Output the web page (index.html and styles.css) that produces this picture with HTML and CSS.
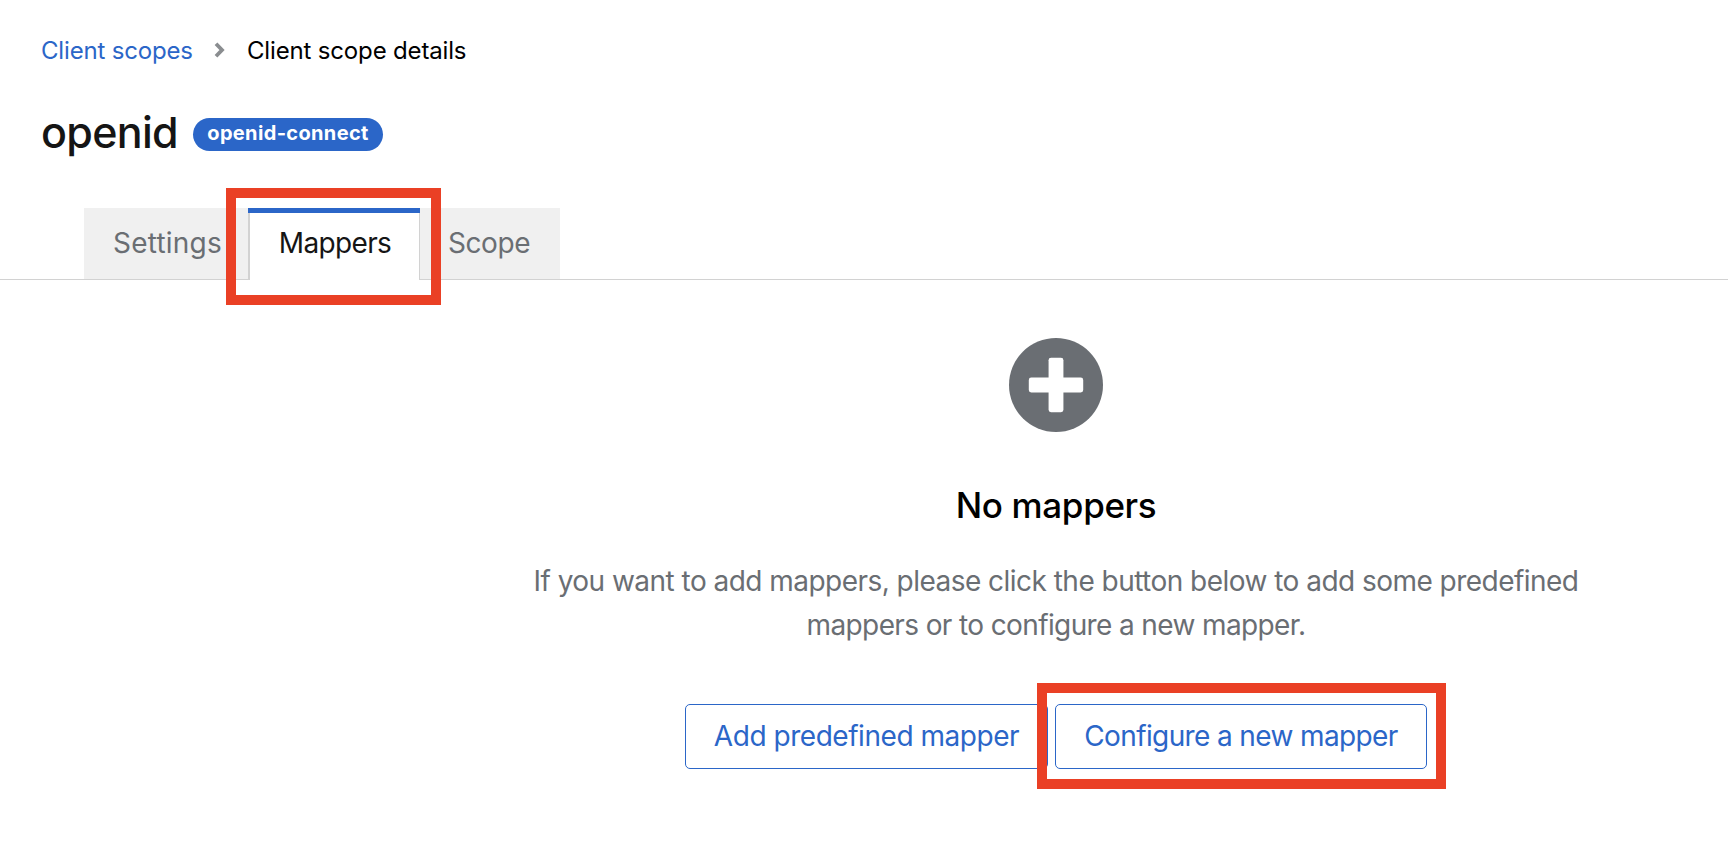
FILE: index.html
```html
<!DOCTYPE html>
<html lang="en">
<head>
<meta charset="utf-8">
<title>Client scope details</title>
<link rel="stylesheet" href="styles.css">
</head>
<body>
<header class="page-header">
  <nav class="breadcrumb">
    <a class="breadcrumb-link" href="#">Client scopes</a>
    <svg class="breadcrumb-arrow" viewBox="0 0 11 16" width="11" height="16"><path d="M2 1.8L8 8L2 14.2" fill="none" stroke="#8a8d90" stroke-width="3.8"/></svg>
    <span class="breadcrumb-current">Client scope details</span>
  </nav>
  <div class="title-row">
    <h1 class="title">openid</h1>
    <span class="badge">openid-connect</span>
  </div>
</header>
<div class="tabs">
  <div class="tab tab-settings">Settings</div>
  <div class="tab tab-active">Mappers</div>
  <div class="tab tab-scope">Scope</div>
</div>
<main class="empty-state">
  <svg class="empty-icon" viewBox="0 0 95 95" width="94" height="94"><circle cx="47.5" cy="47.5" r="47.5" fill="#6a6e73"/><rect x="20" y="40" width="55" height="15" rx="2.5" fill="#fff"/><rect x="40" y="20" width="15" height="55" rx="2.5" fill="#fff"/></svg>
  <h2 class="empty-title">No mappers</h2>
  <p class="empty-text"><span class="line-one">If you want to add mappers, please click the button below to add some predefined</span><br><span class="line-two">mappers or to configure a new mapper.</span></p>
  <div class="actions">
    <button class="button button-add">Add predefined mapper</button>
    <button class="button button-configure">Configure a new mapper</button>
  </div>
</main>
</body>
</html>
```
FILE: styles.css
```css
* { box-sizing: border-box; }
body {
  margin: 0;
  height: 868px;
  overflow: hidden;
  background: #fff;
  color: #151515;
  font-family: Inter, "Liberation Sans", sans-serif;
}
.page-header { padding: 32px 41px 0; height: 208px; }
.breadcrumb {
  display: flex;
  align-items: center;
  height: 36px;
  font-size: 24px;
  white-space: nowrap;
  color: #000;
}
.breadcrumb-link { width: 152px; color: #2b66c8; text-decoration: none; letter-spacing: -0.17px; }
.breadcrumb-arrow { margin: 0 22px 0 21px; }
.breadcrumb-current { letter-spacing: -0.16px; }
.title-row { display: flex; align-items: center; height: 60px; margin-top: 34px; }
.title { width: 152px; margin: 0; font-size: 43px; line-height: 60px; font-weight: 500; letter-spacing: -0.7px; }
.badge {
  width: 190px;
  height: 33px;
  margin-top: 4px;
  border-radius: 17px;
  background: #2b66c8;
  color: #fff;
  font-size: 20px;
  font-weight: 700;
  line-height: 31px;
  text-align: center;
  white-space: nowrap;
  letter-spacing: 0.35px;
}
.tabs {
  display: flex;
  height: 72px;
  padding-left: 84px;
  border-bottom: 1px solid #d2d2d2;
}
.tab {
  height: 71px;
  background: #f0f0f0;
  color: #6a6e73;
  font-size: 28px;
  line-height: 70px;
  text-align: center;
  white-space: nowrap;
  letter-spacing: -0.4px;
}
.tab-settings { width: 164px; padding-left: 3px; letter-spacing: 0.2px; }
.tab-scope { width: 140px; padding-right: 2px; }
.tab-active {
  position: relative;
  width: 172px;
  height: 72px;
  padding-left: 2px;
  background: #fff;
  color: #151515;
  box-shadow: inset 0 5px #2b66c8, inset 2px 0 #d2d2d2, inset -1px 0 #d2d2d2;
  letter-spacing: -0.65px;
}
.tab-active::after {
  content: "";
  position: absolute;
  inset: -20px -21px -25px -22px;
  border: 10px solid #ea4025;
}
.empty-state { display: flex; flex-direction: column; align-items: center; width: 1056px; margin-left: 528px; padding-top: 58px; }
.empty-icon { margin-right: 1px; }
.empty-title { margin: 48px 0 0; color: #000; font-size: 35px; line-height: 50px; font-weight: 500; letter-spacing: -0.35px; }
.empty-text { margin: 29px 0 0; color: #6a6e73; font-size: 28px; line-height: 44px; text-align: center; white-space: nowrap; }
.line-one { letter-spacing: -0.53px; }
.line-two { letter-spacing: -0.62px; }
.actions { display: flex; gap: 7px; margin-top: 57px; }
.button {
  position: relative;
  height: 65px;
  padding: 0;
  border: 1px solid #2b66c8;
  border-radius: 5px;
  background: #fff;
  color: #2b66c8;
  font: 28px/63px Inter, "Liberation Sans", sans-serif;
  white-space: nowrap;
}
.button-add { width: 363px; letter-spacing: -0.46px; }
.button-configure { width: 372px; letter-spacing: -0.62px; }
.button-configure::after {
  content: "";
  position: absolute;
  inset: -22px -20px -21px -19px;
  border: 10px solid #ea4025;
}
```
